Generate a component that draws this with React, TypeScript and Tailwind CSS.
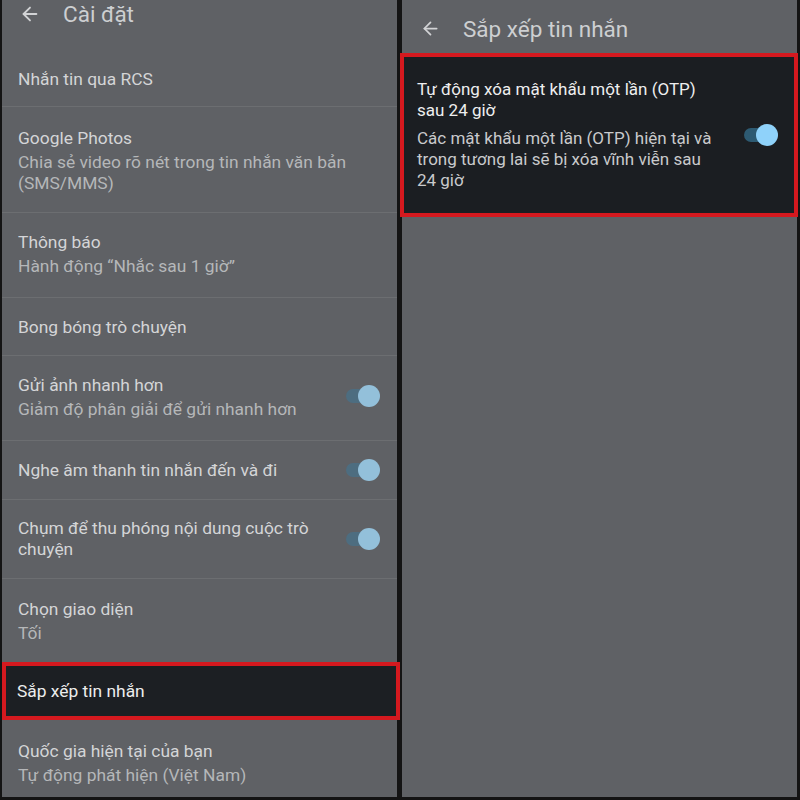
import { ArrowLeft } from "lucide-react";

const font = { fontFamily: "Roboto, 'Noto Sans', Arial, sans-serif" };

function Toggle({ bright }: { bright?: boolean }) {
  return (
    <div className="relative h-[22px] w-[34px] shrink-0">
      <div className={`absolute left-0 top-[4px] h-[14px] w-[28px] rounded-full ${bright ? "bg-[#2d5a72]" : "bg-[#4d6d80]"}`} />
      <div className={`absolute right-0 top-0 h-[22px] w-[22px] rounded-full ${bright ? "bg-[#8fd2fa]" : "bg-[#93c0da]"}`} />
    </div>
  );
}

type Row = { title: string[]; sub?: string[]; h: string; toggle?: boolean; divider?: boolean; pb?: boolean };

const rows: Row[] = [
  { title: ["Nhắn tin qua RCS"], h: "h-[55px]", divider: true },
  { title: ["Google Photos"], sub: ["Chia sẻ video rõ nét trong tin nhắn văn bản", "(SMS/MMS)"], h: "h-[106px]", divider: true },
  { title: ["Thông báo"], sub: ["Hành động “Nhắc sau 1 giờ”"], h: "h-[85px]", divider: true, pb: true },
  { title: ["Bong bóng trò chuyện"], h: "h-[58px]", divider: true },
  { title: ["Gửi ảnh nhanh hơn"], sub: ["Giảm độ phân giải để gửi nhanh hơn"], h: "h-[85px]", toggle: true, divider: true, pb: true },
  { title: ["Nghe âm thanh tin nhắn đến và đi"], h: "h-[59px]", toggle: true, divider: true },
  { title: ["Chụm để thu phóng nội dung cuộc trò", "chuyện"], h: "h-[79px]", toggle: true, divider: true },
  { title: ["Chọn giao diện"], sub: ["Tối"], h: "h-[83px]" },
];

function SettingRow({ row }: { row: Row }) {
  return (
    <div className={`flex items-center justify-between pl-[16px] pr-[17px] ${row.h} ${row.pb ? "pb-[4px]" : ""} ${row.divider ? "border-b border-[#6c6e71]" : ""}`}>
      <div className="flex flex-col">
        {row.title.map((t, i) => (
          <span key={i} className={`whitespace-nowrap text-[17.4px] text-[#d4d5d7] ${row.title.length > 1 ? "leading-[21px]" : "leading-[24px]"}`}>{t}</span>
        ))}
        {row.sub && (
          <div className="mt-[2px] flex flex-col">
            {row.sub.map((s, i) => (
              <span key={i} className="whitespace-nowrap text-[17.4px] leading-[21px] text-[#b5b7b9]">{s}</span>
            ))}
          </div>
        )}
      </div>
      {row.toggle && <Toggle />}
    </div>
  );
}

export default function App() {
  return (
    <div style={font} className="flex h-[800px] w-[800px] overflow-hidden bg-[#141414] pb-[3px] pl-[2px] pr-[3px]">
      {/* left: settings */}
      <div className="flex w-[395px] flex-col bg-[#5f6165]">
        <div className="flex h-[52px] shrink-0 items-start pt-[2px]">
          <ArrowLeft className="ml-[17px] mt-px h-[22px] w-[22px] text-[#d2d3d5]" strokeWidth={2} />
          <span className="ml-[22px] text-[22.5px] leading-[24px] text-[#cdcfd1]">Cài đặt</span>
        </div>
        {rows.map((r, i) => (
          <SettingRow key={i} row={r} />
        ))}
        <div className="relative z-10 -mr-[3px] flex h-[58px] items-center border-[4px] border-[#d5191f] bg-[#1c1f23] pl-[11px]">
          <span className="text-[17.4px] leading-[24px] text-[#eceded]">Sắp xếp tin nhắn</span>
        </div>
        <div className="flex flex-1 flex-col justify-center pl-[16px] pt-[8px]">
          <span className="whitespace-nowrap text-[17.4px] leading-[24px] text-[#d4d5d7]">Quốc gia hiện tại của bạn</span>
          <span className="mt-[2px] whitespace-nowrap text-[17.4px] leading-[21px] text-[#b5b7b9]">Tự động phát hiện (Việt Nam)</span>
        </div>
      </div>

      <div className="w-[5px] shrink-0" />

      {/* right: message sorting */}
      <div className="flex w-[395px] flex-col bg-[#5f6165]">
        <div className="flex h-[53px] shrink-0 items-center pt-[4px]">
          <ArrowLeft className="ml-[18px] h-[21px] w-[21px] text-[#d2d3d5]" strokeWidth={2} />
          <span className="ml-[22px] text-[22.5px] leading-[24px] text-[#cdcfd1]">Sắp xếp tin nhắn</span>
        </div>
        <div className="-ml-[2px] -mr-[1px] flex h-[164px] items-center justify-between border-[4px] border-[#d5191f] bg-[#1b1e22] pl-[13px] pr-[16px]">
          <div className="flex flex-col">
            <span className="whitespace-nowrap text-[17px] leading-[21px] text-[#eeeeef]">Tự động xóa mật khẩu một lần (OTP)</span>
            <span className="whitespace-nowrap text-[17px] leading-[21px] text-[#eeeeef]">sau 24 giờ</span>
            <div className="mt-[7px] flex flex-col">
              <span className="whitespace-nowrap text-[17px] leading-[21px] text-[#c9cacc]">Các mật khẩu một lần (OTP) hiện tại và</span>
              <span className="whitespace-nowrap text-[17px] leading-[21px] text-[#c9cacc]">trong tương lai sẽ bị xóa vĩnh viễn sau</span>
              <span className="whitespace-nowrap text-[17px] leading-[21px] text-[#c9cacc]">24 giờ</span>
            </div>
          </div>
          <Toggle bright />
        </div>
      </div>
    </div>
  );
}
